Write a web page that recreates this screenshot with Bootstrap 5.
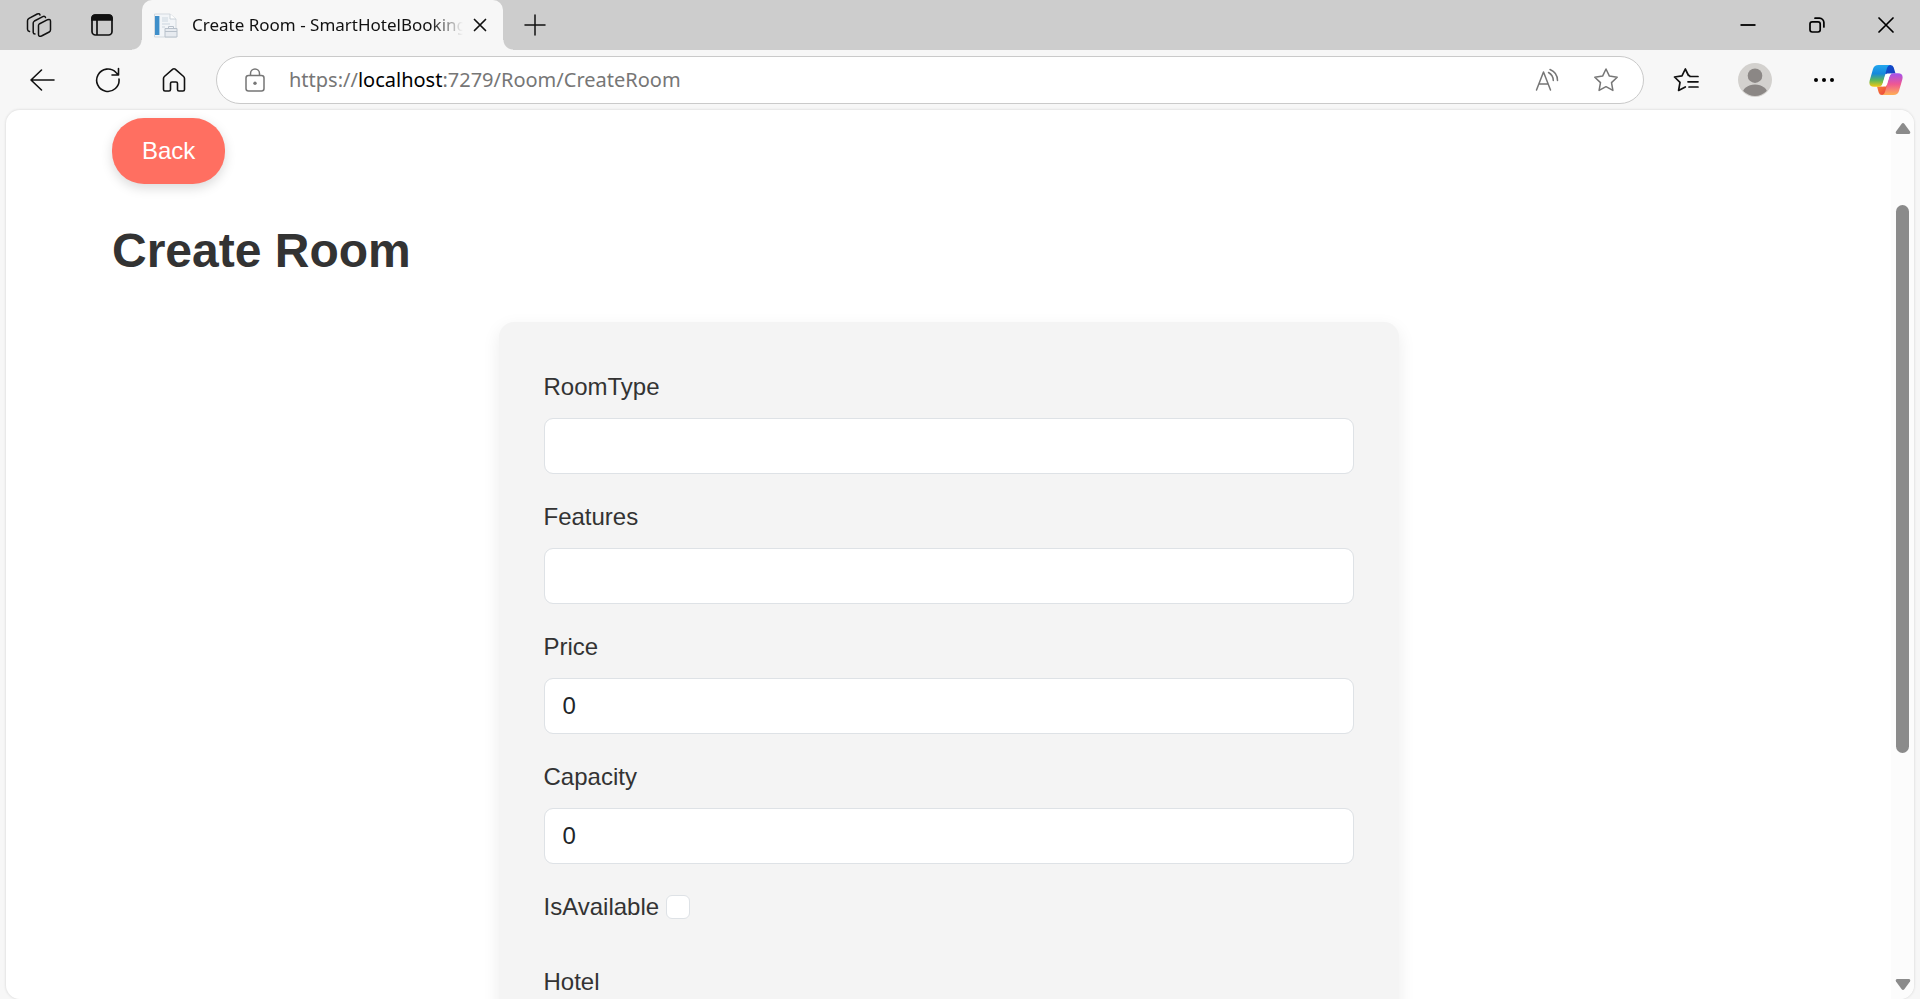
<!DOCTYPE html>
<html lang="en">
<head>
<meta charset="utf-8">
<meta name="viewport" content="width=device-width, initial-scale=1">
<title>Create Room - SmartHotelBooking</title>
<link href="https://cdn.jsdelivr.net/npm/bootstrap@5.3.0/dist/css/bootstrap.min.css" rel="stylesheet">
<style>
  body { background: #f7f7f7; font-family: "Liberation Sans", Arial, sans-serif; color: #333; }
  svg { display: block; flex: none; }
  .ui-font { font-family: "Noto Sans", "Open Sans", sans-serif; }

  /* Tab strip */
  .tab-strip { height: 50px; background: #cdcdcd; padding-left: 7px; }
  .strip-shade { position: absolute; top: 0; left: 40%; width: 20%; height: 8px; background: radial-gradient(closest-side at 50% 0, #c6c6c6 60%, #cdcdcd); }
  .icon-btn { border: 0; background: none; padding: 0; height: 100%; color: #111; display: flex; align-items: center; justify-content: center; flex: none; }
  .w-strip { width: 63px; }
  .w-tool { width: 66px; }
  .w-win { width: 69px; }
  .w-field { width: 59px; }
  .w-pilot { width: 56px; }
  .page-tab { width: 361px; margin-left: 9px; padding: 0 6px 0 11px; background: #f7f7f7; border-radius: 10px 10px 0 0; position: relative; }
  .page-tab::before, .page-tab::after { content: ""; position: absolute; bottom: 0; width: 10px; height: 10px; }
  .page-tab::before { right: 100%; background: radial-gradient(circle at 0 0, #cdcdcd 9px, #f7f7f7 10px); }
  .page-tab::after { left: 100%; background: radial-gradient(circle at 100% 0, #cdcdcd 9px, #f7f7f7 10px); }
  .tab-title { font-size: 17px; line-height: 24px; color: #111; margin-left: 14px; flex: 1 1 0; min-width: 0; overflow: hidden; white-space: nowrap;
    -webkit-mask-image: linear-gradient(90deg, #000 88%, transparent); mask-image: linear-gradient(90deg, #000 88%, transparent); }
  .tab-close { width: 34px; }

  /* Toolbar */
  .tool-bar { height: 60px; padding: 0 6px 0 9px; }
  .address { height: 48px; margin: 0 7px 0 9px; padding: 0 8px 0 28px; background: #fff; border: 1px solid #cacaca; border-radius: 24px; }
  .address-text { font-size: 20px; line-height: 28px; color: #767676; margin-left: 24px; }
  .address-text b { font-weight: 400; color: #000; }
  .grey-ink { color: #767676; }

  /* Page */
  .page-view { margin: 0 6px; background: #fff; border-radius: 14px; box-shadow: 0 0 2px 1px #e4e4e4; min-height: 0; }
  .page-body { padding: 8px 106px 0; }
  .btn-back { background: #ff6f61; color: #fff; font-size: 24px; line-height: 36px; padding: 15px 30px; border: 0; border-radius: 32px; box-shadow: 0 4px 12px rgba(0,0,0,.15); }
  .btn-back:hover { background: #e65b50; color: #fff; }
  .page-title { font-size: 48px; line-height: 58px; font-weight: 700; margin: 38px 0 42px; }
  .room-form { max-width: 900px; padding: 46px 45px; background: #f4f4f4; border-radius: 15px; box-shadow: 0 6px 18px rgba(0,0,0,.08); }
  .room-form label { display: block; font-size: 24px; line-height: 38px; }
  .field-row { margin-bottom: 24px; }
  .field-row label { margin-bottom: 12px; }
  .room-form .form-control, .room-form .form-select { height: 56px; font-size: 24px; line-height: 36px; padding: 9px 18px; border: 1px solid #dee2e6; border-radius: 9px; color: #212529; }
  .check-row { margin-bottom: 37px; gap: 7px; }
  .check-row .form-check-input { width: 24px; height: 24px; margin: 0; border: 1px solid #dee2e6; border-radius: 6px; }

  /* Scroll bar */
  .scroll-rail { width: 23px; padding: 13px 0 9px; background: #fcfcfc; border-radius: 0 14px 14px 0; }
  .scroll-rail .upper { flex: 71 1 0; }
  .scroll-rail .grip { flex: 547 1 0; width: 13px; background: #8b8b8b; border-radius: 7px; }
  .scroll-rail .lower { flex: 226 1 0; }
</style>
</head>
<body class="d-flex flex-column vh-100 overflow-hidden">

<header class="ui-font flex-shrink-0">
  <div class="tab-strip d-flex position-relative">
    <div class="strip-shade"></div>
    <button class="icon-btn w-strip" type="button" aria-label="Workspaces">
      <svg width="26" height="26" viewBox="0 0 26 26" fill="none" stroke="currentColor" stroke-width="1.5" stroke-linejoin="round" stroke-linecap="round">
        <path d="M13.2 12 L21.6 7.7 Q24.5 6.800 24.500 9.200 V17.800 Q24.500 19.300 23.200 20 L15.500 24 Q12.500 25 12.500 22.500 V13.500 Q12.500 12.500 13.200 12Z"/>
        <path d="M19.500 5.500 Q18.800 3.700 16.800 4.600 L8.400 9 Q7.200 9.800 7.200 11 V20.500 Q7.300 22 9 22"/>
        <path d="M14 3 Q13.300 1 11.200 2 L3 6.300 Q1.500 7.200 1.500 8.800 V17.200 Q1.600 19 3.500 19.500"/>
      </svg>
    </button>
    <button class="icon-btn w-strip" type="button" aria-label="Tab actions">
      <svg width="24" height="24" viewBox="0 0 24 24" fill="none" stroke="currentColor" stroke-width="1.7">
        <rect x="2" y="2" width="20" height="20" rx="3.500"/><path d="M2 7V5a3 3 0 0 1 3-3h14a3 3 0 0 1 3 3v2z" fill="currentColor"/><path d="M7 7v15"/>
      </svg>
    </button>
    <div class="page-tab d-flex align-items-center">
      <svg width="25" height="25" viewBox="0 0 25 25">
        <path d="M1.500 1H17l6 5v18H1.500z" fill="#f2f5f8" stroke="#d3d9df"/>
        <path d="M17 1v5h6" fill="#fff" stroke="#cbd2d8"/>
        <path d="M2 3h4v19H2z" fill="#3f8fca"/><path d="M6 3h1v19H6z" fill="#a8cde8"/>
        <path d="M9 4h6v5H9z" fill="#dfe6ec"/><path d="M9 11h8M9 14h3" stroke="#cbd5de"/>
        <path d="M12 15.500h12v8.500H12z" fill="#e7ebf0" stroke="#b8c1cb"/><path d="M15.500 15.500v-2h5v2M12 18.500h12" fill="none" stroke="#b8c1cb"/>
      </svg>
      <span class="tab-title">Create Room - SmartHotelBooking</span>
      <button class="icon-btn tab-close" type="button" aria-label="Close tab">
        <svg width="14" height="14" viewBox="0 0 14 14" stroke="currentColor" stroke-width="1.700" stroke-linecap="round"><path d="M1.500 1.500l11 11M12.500 1.500l-11 11"/></svg>
      </button>
    </div>
    <button class="icon-btn w-strip" type="button" aria-label="New tab">
      <svg width="22" height="22" viewBox="0 0 22 22" stroke="currentColor" stroke-width="1.500" stroke-linecap="round"><path d="M11 1v20M1 11h20"/></svg>
    </button>
    <div class="d-flex ms-auto">
      <button class="icon-btn w-win" type="button" aria-label="Minimize">
        <svg width="16" height="16" viewBox="0 0 16 16" stroke="#000" stroke-width="1.800"><path d="M.5 8h15"/></svg>
      </button>
      <button class="icon-btn w-win" type="button" aria-label="Restore">
        <svg width="16" height="16" viewBox="0 0 16 16" fill="none" stroke="#000" stroke-width="1.700" stroke-linecap="round"><rect x="1" y="4.800" width="10.200" height="10.200" rx="2.200"/><path d="M6 1.200h4.500a4.400 4.400 0 0 1 4.400 4.400V10"/></svg>
      </button>
      <button class="icon-btn w-win" type="button" aria-label="Close">
        <svg width="16" height="16" viewBox="0 0 16 16" stroke="#000" stroke-width="1.700" stroke-linecap="round"><path d="M1 1l14 14M15 1L1 15"/></svg>
      </button>
    </div>
  </div>

  <div class="tool-bar d-flex align-items-center">
    <button class="icon-btn w-tool" type="button" aria-label="Go back">
      <svg width="26" height="24" viewBox="0 0 26 24" fill="none" stroke="currentColor" stroke-width="1.600" stroke-linecap="round" stroke-linejoin="round"><path d="M12.500 2L2 12l10.500 10M2 12h23"/></svg>
    </button>
    <button class="icon-btn w-tool" type="button" aria-label="Refresh">
      <svg width="26" height="26" viewBox="0 0 26 26" fill="none" stroke="currentColor" stroke-width="1.600" stroke-linecap="round" stroke-linejoin="round"><path d="M24 12a11.200 11.200 0 1 1-3-6.500L23.500 8M23.500 1.500V8H17"/></svg>
    </button>
    <button class="icon-btn w-tool" type="button" aria-label="Home">
      <svg width="24" height="26" viewBox="0 0 24 26" fill="none" stroke="currentColor" stroke-width="1.600" stroke-linejoin="round"><path d="M1.500 11.500Q1.500 10.300 2.400 9.500L10.800 2.200Q12 1.300 13.200 2.200L21.600 9.500Q22.500 10.300 22.500 11.500V22.500Q22.500 24 21 24H17Q15.500 24 15.500 22.500V16.500Q15.500 15 14 15H10Q8.500 15 8.500 16.500V22.500Q8.500 24 7 24H3Q1.500 24 1.500 22.500Z"/></svg>
    </button>
    <div class="address d-flex align-items-center flex-grow-1">
      <svg class="grey-ink" width="20" height="24" viewBox="0 0 20 24" fill="none" stroke="currentColor" stroke-width="1.500"><rect x="1" y="7.500" width="18" height="15.500" rx="2.500"/><path d="M5.500 7.500V5.500a4.500 4.500 0 0 1 9 0v2"/><circle cx="10" cy="15.200" r="1.700" fill="currentColor" stroke="none"/></svg>
      <span class="address-text">https://<b>localhost</b>:7279/Room/CreateRoom</span>
      <button class="icon-btn w-field grey-ink ms-auto" type="button" aria-label="Read aloud">
        <svg width="24" height="24" viewBox="0 0 24 24" fill="none" stroke="currentColor" stroke-width="1.500" stroke-linecap="round" stroke-linejoin="round"><path d="M1.500 22L8.500 4l7 18M4 16h9M13.500 4.500a9.500 9.500 0 0 1 4.800 8M15 1.500a12 12 0 0 1 7.500 11"/></svg>
      </button>
      <button class="icon-btn w-field grey-ink" type="button" aria-label="Add to favorites">
        <svg width="26" height="26" viewBox="0 0 26 26" fill="none" stroke="currentColor" stroke-width="1.500" stroke-linejoin="round"><path d="M13 2l3.400 7.100 7.800 1.100-5.700 5.400 1.400 7.800L13 19.700l-6.900 3.700 1.400-7.800-5.700-5.400 7.800-1.100z"/></svg>
      </button>
    </div>
    <button class="icon-btn w-win" type="button" aria-label="Favorites">
      <svg width="26" height="26" viewBox="0 0 26 26" fill="none" stroke="currentColor" stroke-width="1.700" stroke-linecap="round" stroke-linejoin="round"><path d="M16.500 8.700L15.500 8.500 12.300 2 9 8.800 1.500 10l5.500 5.300-1.400 8.200 6.700-3.500M17 9.500h8M15 14.800h10M16 20h9"/></svg>
    </button>
    <button class="icon-btn w-win" type="button" aria-label="Profile">
      <svg width="34" height="34" viewBox="0 0 34 34"><defs><clipPath id="face"><circle cx="17" cy="17" r="16"/></clipPath></defs><circle cx="17" cy="17" r="17" fill="#d3d1ce"/><g fill="#8b8785" clip-path="url(#face)"><circle cx="17" cy="12.700" r="7.300"/><ellipse cx="17" cy="32" rx="13" ry="10.500"/></g></svg>
    </button>
    <button class="icon-btn w-win" type="button" aria-label="Settings and more">
      <svg width="22" height="6" viewBox="0 0 22 6" fill="#000"><circle cx="3" cy="3" r="2"/><circle cx="11" cy="3" r="2"/><circle cx="19" cy="3" r="2"/></svg>
    </button>
    <button class="icon-btn w-pilot" type="button" aria-label="Copilot">
      <svg width="34" height="32" viewBox="0 0 34 32">
        <defs>
          <linearGradient id="cpA" x1="0" y1="0" x2="0" y2="1"><stop offset="0" stop-color="#22a7ee"/><stop offset=".4" stop-color="#1588dc"/><stop offset=".7" stop-color="#5cb75a"/><stop offset="1" stop-color="#f6c90e"/></linearGradient>
          <linearGradient id="cpB" x1="0" y1="0" x2="0" y2="1"><stop offset="0" stop-color="#a252ee"/><stop offset=".5" stop-color="#ef5793"/><stop offset="1" stop-color="#ffb054"/></linearGradient>
          <linearGradient id="cpC" x1="0" y1="0" x2="1" y2="1"><stop offset="0" stop-color="#0b52d4"/><stop offset="1" stop-color="#1a3cb8"/></linearGradient>
          <linearGradient id="cpD" x1="0" y1="0" x2="1" y2="1"><stop offset="0" stop-color="#f98a35"/><stop offset="1" stop-color="#e9383f"/></linearGradient>
        </defs>
        <path d="M17 1h4.500Q24 1 24.700 3.500L26.500 9.500H22Q19 9.500 18 12L15 8z" fill="url(#cpC)"/>
        <path d="M17 31h-4Q10.500 31 9.700 28.500L8 22.500h4.500Q15.500 22.500 16.500 20L20 24z" fill="url(#cpD)"/>
        <path d="M9.500 1H21Q18.700 1.500 18 4L13.800 19Q12.700 22.800 9 22.800H5Q-.8 22.800.7 16.500L4 5Q5.200 1 9.500 1z" fill="url(#cpA)"/>
        <path d="M24.500 31H13Q15.400 30.500 16 28L20.200 13Q21.300 9.200 25 9.200h4Q34.800 9.200 33.300 15.500L30 27Q28.800 31 24.500 31z" fill="url(#cpB)"/>
        <path d="M18.300 9.500H22Q20.800 10.500 20.200 13L17 22.500H12.500Q13.400 21.500 13.900 19L16.500 11Q17 9.500 18.300 9.500z" fill="#fff"/>
      </svg>
    </button>
  </div>
</header>

<div class="page-view d-flex flex-grow-1 overflow-hidden">
  <main class="page-body flex-grow-1">
    <button class="btn btn-back" type="button">Back</button>
    <h1 class="page-title">Create Room</h1>
    <form class="room-form mx-auto">
      <div class="field-row">
        <label for="roomType">RoomType</label>
        <input class="form-control" id="roomType" type="text">
      </div>
      <div class="field-row">
        <label for="features">Features</label>
        <input class="form-control" id="features" type="text">
      </div>
      <div class="field-row">
        <label for="price">Price</label>
        <input class="form-control" id="price" type="text" value="0">
      </div>
      <div class="field-row">
        <label for="capacity">Capacity</label>
        <input class="form-control" id="capacity" type="text" value="0">
      </div>
      <div class="check-row d-flex align-items-center">
        <label for="isAvailable">IsAvailable</label>
        <input class="form-check-input" id="isAvailable" type="checkbox">
      </div>
      <div class="field-row">
        <label for="hotel">Hotel</label>
        <select class="form-select" id="hotel"></select>
      </div>
    </form>
  </main>
  <div class="scroll-rail d-flex flex-column align-items-center flex-shrink-0">
    <svg width="16" height="11" viewBox="0 0 16 11"><path d="M6.500 1Q8-.8 9.500 1L15 8.500Q16 11 13.500 11H2.500Q0 11 1 8.500z" fill="#8b8b8b"/></svg>
    <div class="upper"></div>
    <div class="grip"></div>
    <div class="lower"></div>
    <svg width="16" height="11" viewBox="0 0 16 11"><path d="M6.500 10Q8 11.800 9.500 10L15 2.500Q16 0 13.500 0H2.500Q0 0 1 2.500z" fill="#8b8b8b"/></svg>
  </div>
</div>

<script src="https://cdn.jsdelivr.net/npm/bootstrap@5.3.0/dist/js/bootstrap.bundle.min.js"></script>
</body>
</html>
